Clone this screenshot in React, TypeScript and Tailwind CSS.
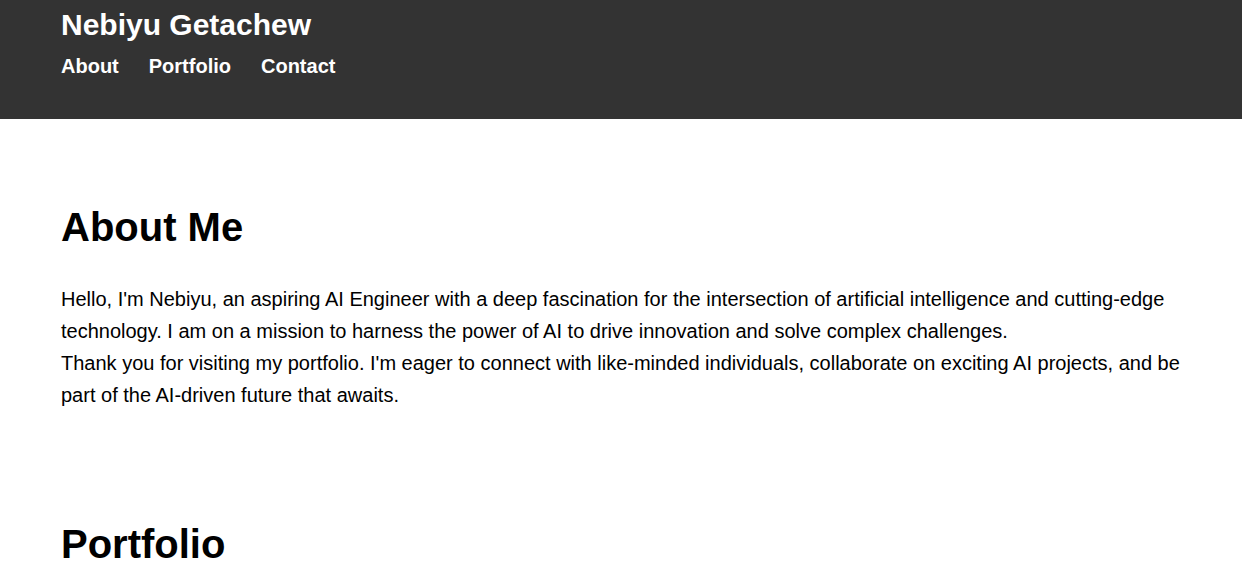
export default function App() {
  return (
    <div className="min-h-screen bg-white font-['Liberation_Sans',Arial,sans-serif] text-black">
      <header className="bg-[#333333] px-[61px] pt-[8px] pb-[41px] text-white">
        <h1 className="text-[30px] font-bold leading-[34px]">Nebiyu Getachew</h1>
        <nav className="mt-[13px] flex gap-[30px] text-[20px] font-bold leading-[23px]">
          <a href="#about">About</a>
          <a href="#portfolio">Portfolio</a>
          <a href="#contact">Contact</a>
        </nav>
      </header>
      <main className="px-[61px]">
        <section className="pt-[85px]">
          <h2 className="text-[40px] font-bold leading-[46px]">About Me</h2>
          <p className="mt-[33px] text-[20px] leading-[32px]">
            Hello, I'm Nebiyu, an aspiring AI Engineer with a deep fascination for the intersection of artificial intelligence and cutting-edge technology. I am on a mission to harness the power of AI to drive innovation and solve complex challenges.
          </p>
          <p className="text-[20px] leading-[32px]">
            Thank you for visiting my portfolio. I'm eager to connect with like-minded individuals, collaborate on exciting AI projects, and be part of the AI-driven future that awaits.
          </p>
        </section>
        <section className="pt-[110px]">
          <h2 className="text-[40px] font-bold leading-[46px]">Portfolio</h2>
        </section>
      </main>
    </div>
  );
}
